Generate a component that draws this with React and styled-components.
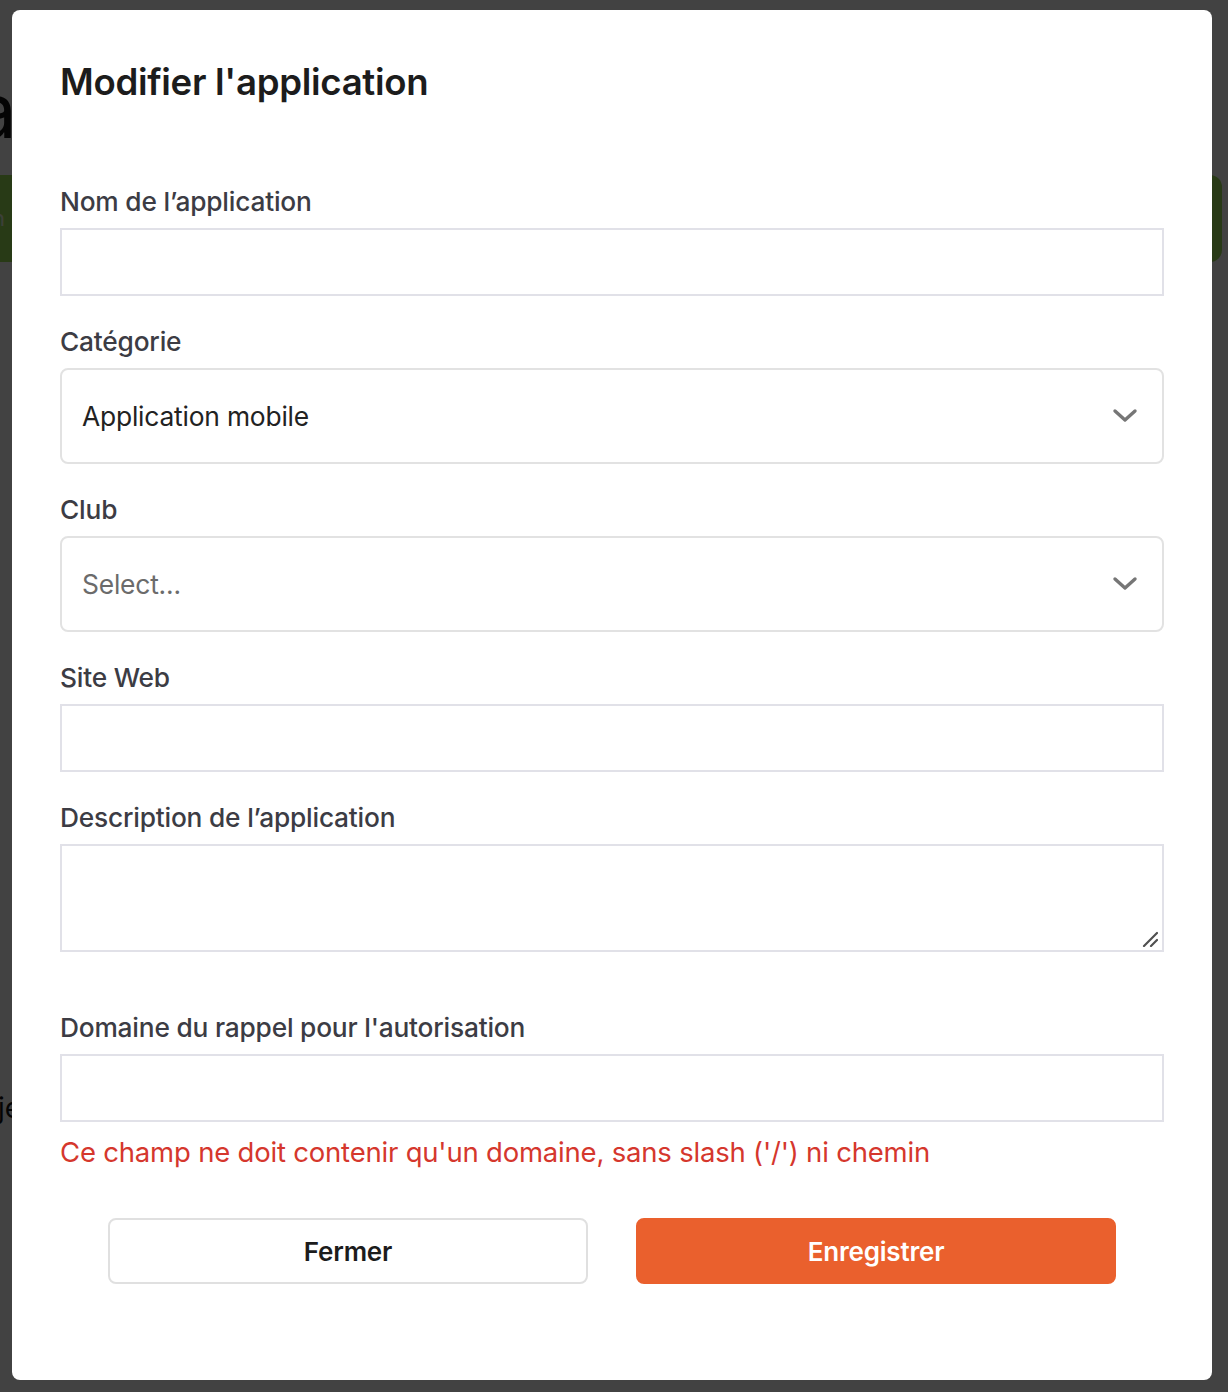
import React from "react";
import styled, { createGlobalStyle } from "styled-components";

const Global = createGlobalStyle`
  * { box-sizing: border-box; }
  html, body { margin: 0; padding: 0; background: #ffffff; }
  body { font-family: Inter, "Noto Sans", Roboto, sans-serif; overflow: hidden; }
`;

const Page = styled.div`
  width: 1228px;
  height: 1392px;
  padding-top: 60px;
  overflow: hidden;
`;

const PageTitle = styled.h1`
  margin: 0 0 0 -26px;
  font-size: 76px;
  font-weight: 400;
  line-height: 100px;
  color: #111;
`;

const GreenBar = styled.div`
  margin-top: 15px;
  width: 1222px;
  height: 87px;
  background: #9bdf55;
  border-radius: 0 12px 12px 0;
  color: #e8f5da;
  font-size: 22px;
  line-height: 87px;
  text-indent: -8px;
`;

const PageText = styled.p`
  margin: 829px 0 0 -2px;
  font-size: 28px;
  color: #111;
`;

const Overlay = styled.div`
  position: fixed;
  inset: 0;
  background: rgba(0, 0, 0, 0.74);
  padding: 10px 16px 12px 12px;
`;

const Modal = styled.div`
  width: 1200px;
  height: 1370px;
  background: #fff;
  border-radius: 8px;
  padding: 50px 48px 0 48px;
  display: flex;
  flex-direction: column;
`;

const Title = styled.h2`
  margin: 0;
  font-size: 36.6px;
  font-weight: 600;
  line-height: 44px;
  color: #1c1c1c;
  letter-spacing: -0.3px;
`;

const Form = styled.form`
  margin-top: 80px;
  display: flex;
  flex-direction: column;
`;

const Field = styled.div`
  position: relative;
  display: flex;
  flex-direction: column;
  margin-bottom: ${(p) => p.$mb ?? 28}px;
`;

const Label = styled.label`
  font-size: 26.3px;
  font-weight: 500;
  line-height: 36px;
  color: #3c3c44;
  margin-bottom: 8px;
  letter-spacing: -0.2px;
`;

const TextInput = styled.input`
  width: 100%;
  height: 68px;
  border: 2px solid #e1e1e8;
  border-radius: 0;
  background: #fff;
  font: inherit;
  font-size: 26.4px;
  padding: 0 20px;
  outline: none;
`;

const TextArea = styled.textarea`
  display: block;
  width: 100%;
  height: 108px;
  border: 2px solid #e1e1e8;
  border-radius: 0;
  background: #fff;
  font: inherit;
  font-size: 26.4px;
  padding: 12px 20px;
  outline: none;
  resize: none;
`;

const ResizeGrip = styled.svg`
  position: absolute;
  right: 6px;
  bottom: 5px;
  pointer-events: none;
`;

const SelectBox = styled.div`
  height: 96px;
  border: 2px solid #e2e2e2;
  border-radius: 8px;
  display: flex;
  align-items: center;
  justify-content: space-between;
  padding: 0 24px 0 20px;
`;

const SelectValue = styled.span`
  font-size: 26.4px;
  color: ${(p) => (p.$placeholder ? "#6b6b6b" : "#222")};
  letter-spacing: -0.2px;
`;

const ErrorText = styled.div`
  margin-top: 12px;
  font-size: 27.5px;
  line-height: 36px;
  color: #d5372d;
  letter-spacing: -0.2px;
`;

const Buttons = styled.div`
  margin-top: 48px;
  display: flex;
  justify-content: center;
  gap: 48px;
`;

const Button = styled.button`
  width: 480px;
  height: 66px;
  border-radius: 8px;
  font: inherit;
  font-size: 26px;
  font-weight: 600;
  letter-spacing: -0.2px;
  cursor: pointer;
  border: 2px solid ${(p) => (p.$primary ? "#ea602d" : "#e0e0e0")};
  background: ${(p) => (p.$primary ? "#ea602d" : "#fff")};
  color: ${(p) => (p.$primary ? "#fff" : "#1c1c1c")};
`;

const Chevron = () => (
  <svg width="26" height="16" viewBox="0 0 26 16" fill="none">
    <path d="M3 3l10 9 10-9" stroke="#767676" strokeWidth="3.4" strokeLinecap="round" strokeLinejoin="round" />
  </svg>
);

export default function App() {
  return (
    <>
      <Global />
      <Page>
        <PageTitle>a</PageTitle>
        <GreenBar>n</GreenBar>
        <PageText>je</PageText>
      </Page>
      <Overlay>
        <Modal>
          <Title>Modifier l'application</Title>
          <Form onSubmit={(e) => e.preventDefault()}>
            <Field>
              <Label>Nom de l’application</Label>
              <TextInput type="text" />
            </Field>
            <Field>
              <Label>Catégorie</Label>
              <SelectBox>
                <SelectValue>Application mobile</SelectValue>
                <Chevron />
              </SelectBox>
            </Field>
            <Field>
              <Label>Club</Label>
              <SelectBox>
                <SelectValue $placeholder>Select...</SelectValue>
                <Chevron />
              </SelectBox>
            </Field>
            <Field>
              <Label>Site Web</Label>
              <TextInput type="text" />
            </Field>
            <Field $mb={58}>
              <Label>Description de l’application</Label>
              <TextArea />
              <ResizeGrip width="16" height="16" viewBox="0 0 16 16">
                <path d="M2 15L15 2M9 15l6-6" stroke="#505050" strokeWidth="2.2" strokeLinecap="round" />
              </ResizeGrip>
            </Field>
            <Field $mb={0}>
              <Label>Domaine du rappel pour l'autorisation</Label>
              <TextInput type="text" />
            </Field>
            <ErrorText>Ce champ ne doit contenir qu'un domaine, sans slash ('/') ni chemin</ErrorText>
            <Buttons>
              <Button type="button">Fermer</Button>
              <Button type="submit" $primary>Enregistrer</Button>
            </Buttons>
          </Form>
        </Modal>
      </Overlay>
    </>
  );
}
